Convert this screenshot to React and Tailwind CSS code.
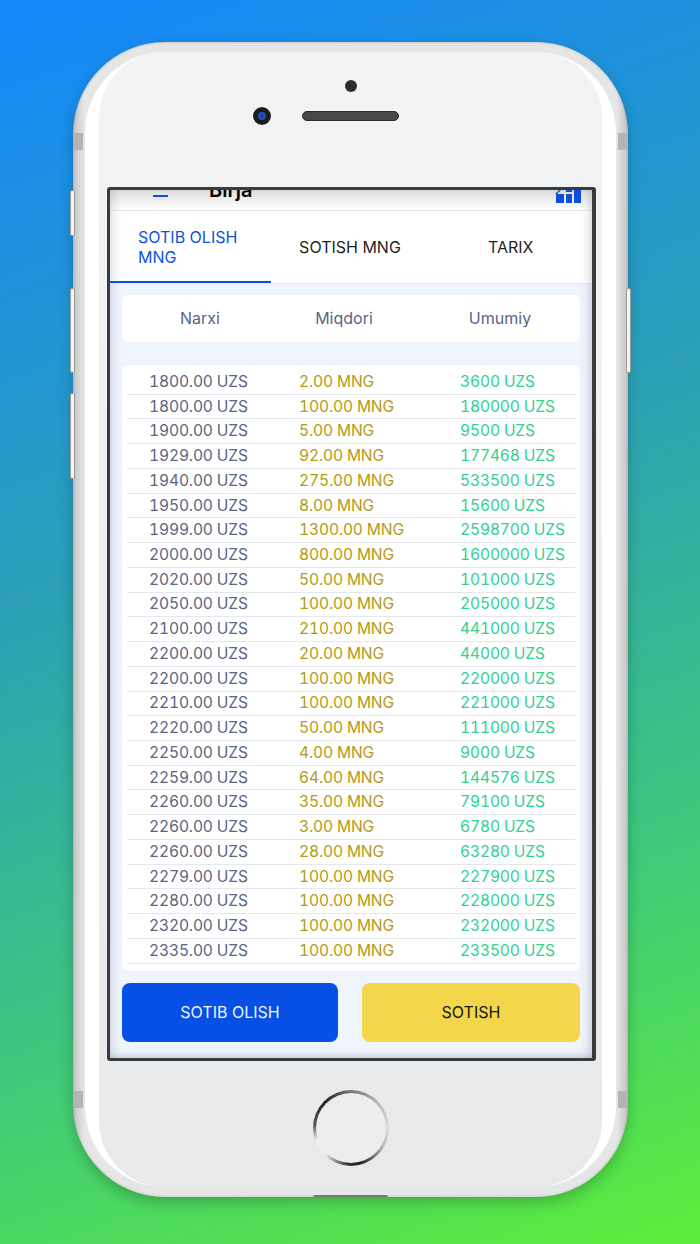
const rows = [
  ["1800.00 UZS","2.00 MNG","3600 UZS"],["1800.00 UZS","100.00 MNG","180000 UZS"],["1900.00 UZS","5.00 MNG","9500 UZS"],
  ["1929.00 UZS","92.00 MNG","177468 UZS"],["1940.00 UZS","275.00 MNG","533500 UZS"],["1950.00 UZS","8.00 MNG","15600 UZS"],
  ["1999.00 UZS","1300.00 MNG","2598700 UZS"],["2000.00 UZS","800.00 MNG","1600000 UZS"],["2020.00 UZS","50.00 MNG","101000 UZS"],
  ["2050.00 UZS","100.00 MNG","205000 UZS"],["2100.00 UZS","210.00 MNG","441000 UZS"],["2200.00 UZS","20.00 MNG","44000 UZS"],
  ["2200.00 UZS","100.00 MNG","220000 UZS"],["2210.00 UZS","100.00 MNG","221000 UZS"],["2220.00 UZS","50.00 MNG","111000 UZS"],
  ["2250.00 UZS","4.00 MNG","9000 UZS"],["2259.00 UZS","64.00 MNG","144576 UZS"],["2260.00 UZS","35.00 MNG","79100 UZS"],
  ["2260.00 UZS","3.00 MNG","6780 UZS"],["2260.00 UZS","28.00 MNG","63280 UZS"],["2279.00 UZS","100.00 MNG","227900 UZS"],
  ["2280.00 UZS","100.00 MNG","228000 UZS"],["2320.00 UZS","100.00 MNG","232000 UZS"],["2335.00 UZS","100.00 MNG","233500 UZS"],
];

export default function App() {
  return (
    <div className="h-[1244px] w-[700px] overflow-hidden pt-[42px] bg-[linear-gradient(160deg,#1487fb_0%,#2a9fb8_40%,#3fc87c_72%,#5cee3a_100%)] font-['Inter','Liberation_Sans',sans-serif]">
      <div className="relative ml-[73px] h-[1155px] w-[555px] rounded-[92px] bg-[linear-gradient(90deg,#c4c4c4,#e6e6e6_2%,#e6e6e6_98%,#c4c4c4)] px-[12px] pt-[10px] shadow-[0_6px_14px_rgba(0,0,0,0.22),inset_0_0_3px_rgba(0,0,0,0.2)]">
        {/* Side buttons and antenna bands */}
        <div className="absolute left-[-3px] top-[148px] h-[46px] w-[5px] rounded-[2px] border border-[#9a9a9a] bg-[#f4f4f4]" />
        <div className="absolute left-[-3px] top-[246px] h-[85px] w-[5px] rounded-[2px] border border-[#9a9a9a] bg-[#f4f4f4]" />
        <div className="absolute left-[-3px] top-[351px] h-[86px] w-[5px] rounded-[2px] border border-[#9a9a9a] bg-[#f4f4f4]" />
        <div className="absolute right-[-3px] top-[246px] h-[85px] w-[5px] rounded-[2px] border border-[#9a9a9a] bg-[#f4f4f4]" />
        <div className="absolute left-0 top-[91px] h-[17px] w-[10px] bg-[#b4b4b4]" />
        <div className="absolute right-0 top-[91px] h-[17px] w-[10px] bg-[#b4b4b4]" />
        <div className="absolute left-0 top-[1049px] h-[17px] w-[10px] bg-[#b4b4b4]" />
        <div className="absolute right-0 top-[1049px] h-[17px] w-[10px] bg-[#b4b4b4]" />
        <div className="absolute bottom-0 left-[240px] h-[2px] w-[75px] rounded-t-[2px] bg-[#777777]" />

        <div className="h-[1135px] rounded-[80px] bg-white px-[14px]">
          <div className="flex h-[1135px] flex-col items-center rounded-[66px] bg-[linear-gradient(180deg,#f2f3f5,#e8e9eb)] pt-[28px]">
            <div className="ml-[1px] h-[12px] w-[12px] rounded-full bg-[#2d2d2f]" />
            <div className="mt-[15px] grid h-[18px] w-full grid-cols-[1fr_auto_1fr] items-center">
              <div className="mr-[31px] flex h-[18px] w-[18px] items-center justify-center justify-self-end rounded-full bg-[radial-gradient(circle,#1c1c1e_60%,#55555a)]">
                <div className="h-[8px] w-[8px] rounded-full bg-[radial-gradient(circle,#1c3c9a,#2a5cd0)]" />
              </div>
              <div className="h-[10px] w-[97px] rounded-full border border-[#2a2a2c] bg-[#47474a]" />
              <div />
            </div>

            <div className="relative ml-[8px] mt-[62px] flex h-[874px] w-[489px] shrink-0 flex-col self-start overflow-hidden rounded-[3px] border-y-[3px] border-l-[3px] border-r-[4px] border-[#3a3b3c] bg-[#f0f4fd]">
              <div className="pointer-events-none absolute inset-0 z-10 shadow-[inset_9px_0_10px_-6px_rgba(40,50,90,0.16),inset_-9px_0_10px_-6px_rgba(40,50,90,0.18),inset_0_-8px_8px_-6px_rgba(40,50,90,0.2)]" />
              {/* Header, clipped by the screen's top edge */}
              <div className="relative h-[21px] shrink-0 border-b border-[#e9e9ec] bg-[linear-gradient(180deg,#dedede,#ffffff)]">
                <div className="absolute left-[43px] top-[5px] h-[2px] w-[15px] bg-[#0b52e4]" />
                <div className="absolute left-[99px] top-[-13px] whitespace-nowrap text-[20px] leading-[26px] font-semibold text-black">Birja</div>
                <svg className="absolute left-[445px] top-0" width="26" height="13" viewBox="0 0 26 13" fill="#0b4fe0">
                  <rect x="1" y="4" width="8" height="9" />
                  <rect x="11" y="4" width="6" height="9" />
                  <rect x="19" y="0" width="7" height="13" />
                  <rect x="11" y="0" width="6" height="2" />
                  <path d="M0 4 L4 0 L6 0 L2 4 Z" />
                </svg>
              </div>

              {/* Tabs */}
              <div className="grid h-[73px] shrink-0 grid-cols-3 border-b border-[#e6eaf5] bg-white text-[16px] leading-[20px] text-[#1f1f1f]">
                <div className="flex items-center border-b-[2px] border-[#0b52e4] pl-[28px] pt-[2px] text-[#0b52e4]"><span>SOTIB OLISH<br />MNG</span></div>
                <div className="flex items-center justify-center pr-[2px]">SOTISH MNG</div>
                <div className="flex items-center justify-center pr-[2px]">TARIX</div>
              </div>

              {/* Table */}
              <div className="flex flex-1 flex-col px-[12px] pt-[11px]">
                <div className="grid h-[47px] shrink-0 grid-cols-[156px_132px_1fr] items-center rounded-[6px] bg-white pb-[2px] text-center text-[16px] text-[#5a6583]">
                  <div>Narxi</div><div>Miqdori</div><div className="pl-[10px]">Umumiy</div>
                </div>
                <div className="mt-[23px] h-[606px] shrink-0 rounded-[6px] bg-white px-[5px] pt-[5px] text-[15.6px] tracking-[-0.15px] tabular-nums">
                  {rows.map((r, i) => (
                    <div key={i} className="grid h-[24.74px] grid-cols-[150px_161px_1fr] items-center whitespace-nowrap border-b border-[#e6e7ea] pl-[22px] leading-[22px]">
                      <div className="text-[#5a6583]">{r[0]}</div>
                      <div className="text-[#b59a14]">{r[1]}</div>
                      <div className="text-[#33d08f]">{r[2]}</div>
                    </div>
                  ))}
                </div>
                <div className="mt-[12px] flex shrink-0 justify-between text-[16px]">
                  <button className="h-[59px] w-[216px] rounded-[8px] bg-[#0650e6] pb-[2px] text-[#eef3ff]">SOTIB OLISH</button>
                  <button className="h-[59px] w-[218px] rounded-[8px] bg-[#f3d64b] pb-[2px] text-[#141414]">SOTISH</button>
                </div>
              </div>
            </div>

            {/* Home button */}
            <div className="mt-[29px] h-[76px] w-[76px] rounded-full bg-[conic-gradient(#777777,#bbbbbb_50deg,#dddddd_90deg,#bbbbbb_120deg,#222222_165deg,#333333_185deg,#eeeeee_225deg,#f0f0f0_250deg,#555555_275deg,#222222_315deg,#777777)] p-[3px]">
              <div className="h-full w-full rounded-full bg-[#ecedef]" />
            </div>
          </div>
        </div>
      </div>
    </div>
  );
}
